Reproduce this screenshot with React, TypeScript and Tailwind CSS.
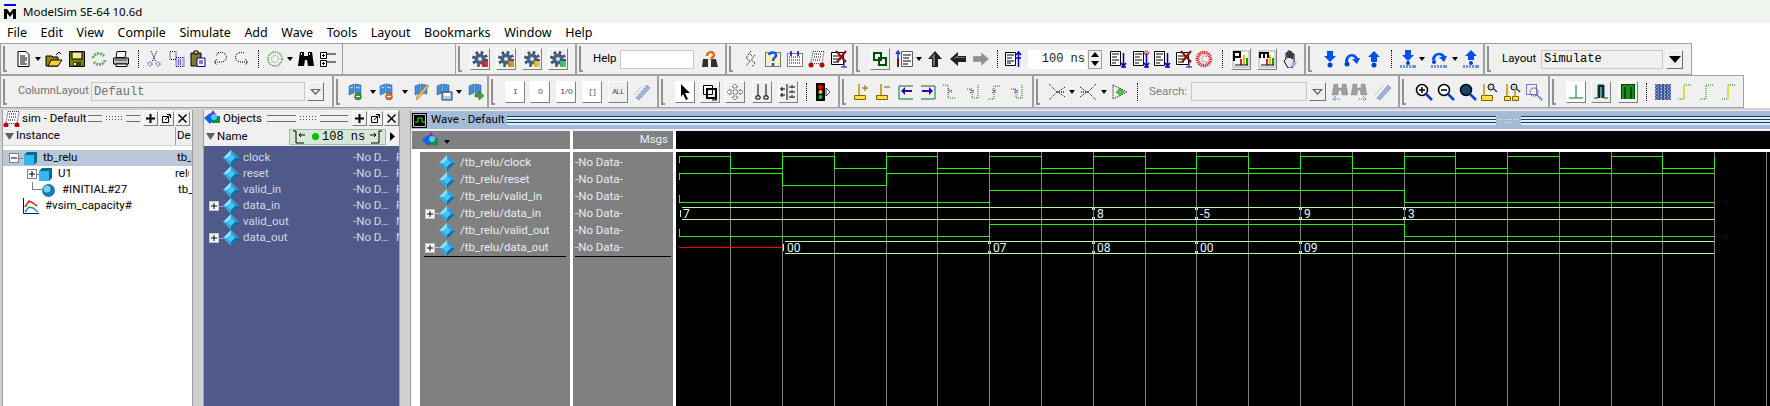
import type { ReactNode } from "react";

type P = { c?: string };
type SP = P & { children?: ReactNode };

const S = ({ c, children }: SP) => (
  <svg viewBox="0 0 18 18" className={`h-[18px] w-[18px] shrink-0 ${c ?? ""}`}>{children}</svg>
);
const Raised = ({ c, children }: SP) => (
  <div className={`flex h-[22px] w-[20px] shrink-0 items-center justify-center border border-t-white border-l-white border-r-[#808080] border-b-[#808080] ${c ?? ""}`}>{children}</div>
);
const Sep = ({ c }: P) => <div className={`h-[18px] w-px shrink-0 border-l border-dotted border-black ${c ?? ""}`} />;
const Down = ({ c }: P) => (
  <svg viewBox="0 0 6 4" className={`h-[4px] w-[6px] shrink-0 ${c ?? ""}`}><path d="M0 0h6L3 4z" fill="#000" /></svg>
);
const Grip = () => (
  <div className="ml-[2px] flex h-[26px] w-[4px] shrink-0 border-l-2 border-b-2 border-l-[#909090] border-b-[#909090]" />
);
const Bar = ({ c, children }: SP) => (
  <div className={`flex h-full shrink-0 items-center border border-[#a0a0a0] bg-[#f0f0f0] ${c ?? ""}`}>
    <Grip />
    {children}
  </div>
);
const Combo = ({ c, solid }: P & { solid?: boolean }) => (
  <div className={`flex h-[19px] w-[17px] shrink-0 items-center justify-center border border-t-white border-l-white border-r-[#707070] border-b-[#707070] ${c ?? ""}`}>
    {solid ? (
      <svg viewBox="0 0 12 7" className="h-[7px] w-[12px]"><path d="M0 0h12L6 7z" fill="#000" /></svg>
    ) : (
      <svg viewBox="0 0 11 6" className="h-[6px] w-[11px]"><path d="M0 0h11L5.5 6z" fill="#666" /><path d="M3 1h5L5.5 4z" fill="#fff" /></svg>
    )}
  </div>
);

const Doc = ({ c }: P) => <S c={c}><path d="M4 1.5h8l3 3v12H4z" fill="#fff" stroke="#000" /><path d="M6 6h5M6 8h7M6 10h7M6 12h5M6 14h7" stroke="#000" /></S>;
const Folder = ({ c }: P) => <S c={c}><path d="M1 6h6l1 1h5v9H1z" fill="#a08000" stroke="#000" /><path d="M3 16l3-6h11l-4 6z" fill="#f0d040" stroke="#000" /><path d="M11 5l3-3 2 2" fill="none" stroke="#000" /></S>;
const Save = ({ c }: P) => <S c={c}><path d="M1.5 1.5h15v15h-15z" fill="#808000" stroke="#000" /><path d="M4 2h10v7H4z" fill="#f0e8a0" stroke="#000" /><path d="M5 12h8v4H5z" fill="#404000" /><path d="M6 13h2v2H6z" fill="#fff" /></S>;
const Sync = ({ c }: P) => <S c={c}><path d="M3 8c1-5 8-6 11-2M15 10c-1 5-8 6-11 2" fill="none" stroke="#60b060" strokeWidth="3" strokeDasharray="2 1" /></S>;
const Printer = ({ c }: P) => <S c={c}><path d="M5 1.5h9l-1 6H4z" fill="#fff" stroke="#000" /><path d="M1.5 8h15v6h-15z" fill="#c0c0c0" stroke="#000" /><path d="M4 14h11v2.5H4z" fill="#fff" stroke="#000" /><path d="M3 10h12" stroke="#404040" /></S>;
const Cut = ({ c }: P) => <S c={c}><path d="M6 1l5 11M12 1L7 12" stroke="#000" strokeDasharray="1 1" /><circle cx="5" cy="14" r="2" fill="none" stroke="#0000d0" strokeDasharray="1 1" /><circle cx="13" cy="14" r="2" fill="none" stroke="#0000d0" strokeDasharray="1 1" /></S>;
const Copy = ({ c }: P) => <S c={c}><path d="M2 1.5h6v8H2z" fill="none" stroke="#000" strokeDasharray="1 1" /><path d="M8 7.5h8v9H8z" fill="#d8d8f0" stroke="#0000b0" strokeDasharray="1 1" /><path d="M10 10h4M10 12h4M10 14h4" stroke="#0000b0" strokeDasharray="1 1" /></S>;
const Paste = ({ c }: P) => <S c={c}><path d="M2 3h10v13H2z" fill="#807830" stroke="#000" /><path d="M5 1h4v3H5z" fill="#e0d070" stroke="#000" /><path d="M8 8h8v8.5H8z" fill="#fff" stroke="#00008b" /><path d="M10 11h4M10 13h4" stroke="#00008b" /></S>;
const Undo = ({ c }: P) => <S c={c}><path d="M6 3c4-2 10 1 8 6-1 3-4 3-6 3H2M5 9l-3 3 3 3M6 3l-2 3" fill="none" stroke="#000" strokeDasharray="1 1" /></S>;
const Redo = ({ c }: P) => <S c={c}><path d="M12 3C8 1 2 4 4 9c1 3 4 3 6 3h6M13 9l3 3-3 3" fill="none" stroke="#000" strokeDasharray="1 1" /></S>;
const Compile = ({ c }: P) => <S c={c}><circle cx="9" cy="9" r="7" fill="none" stroke="#50a050" strokeWidth="1.5" strokeDasharray="1.5 1" /><circle cx="9" cy="9" r="3.5" fill="none" stroke="#50a050" strokeDasharray="1 1" /></S>;
const Binoc = ({ c }: P) => <S c={c}><path d="M3 2h4v4h4V2h4l2 14h-6l-1-6H8l-1 6H1z" fill="#000" /><path d="M4 3h1v2H4zM12 3h1v2h-1z" fill="#fff" /></S>;
const Expand = ({ c }: P) => <S c={c}><path d="M1.5 2.5h6v6h-6zM1.5 10.5h6v6h-6z" fill="#fff" stroke="#000" /><path d="M3 5.5h3M4.5 4v3M3 13.5h3M4.5 12v3M8 4h9M8 12h9" stroke="#000" /></S>;
const Gear = ({ mark }: { mark: string }) => (
  <S>
    <circle cx="9" cy="9" r="6.5" fill="none" stroke="#384868" strokeWidth="3" strokeDasharray="2.5 2.6" />
    <circle cx="9" cy="9" r="5.5" fill="#486080" />
    <circle cx="9" cy="9" r="2" fill="#d8e0f0" />
    <path d="M11 11h6v6h-6z" fill={mark} opacity=".9" />
  </S>
);
const HelpFind = ({ c }: P) => <S c={c}><path d="M2 9h5v8H1zM10 9h5l2 8h-7z" fill="#303030" /><path d="M6 6c0-5 7-5 7-1 0 2-3 2-3 5" fill="none" stroke="#e07000" strokeWidth="2.5" /></S>;
const DotWave = ({ c }: P) => <S c={c}><path d="M9 1l-5 7 4 3-4 5M13 5l-4 5 4 3-3 4" fill="none" stroke="#000" strokeDasharray="1 1" /><path d="M8 4l3 3" stroke="#0000b0" strokeDasharray="1 1" /></S>;
const DocHelp = ({ c }: P) => <S c={c}><path d="M1.5 2.5h15v14h-15z" fill="#f8f0c0" stroke="#000" strokeDasharray="1 1" /><path d="M5 5c1-4 8-3 7 1-1 2-3 2-3 5M9 13v3" fill="none" stroke="#0060e0" strokeWidth="2.5" /></S>;
const DocGrid = ({ c }: P) => <S c={c}><path d="M1.5 3.5h15v13h-15z" fill="#fff" stroke="#000" strokeDasharray="1 1" /><path d="M3 7h12M3 10h12M3 13h12" stroke="#000" strokeDasharray="1 1" /><path d="M5 1v5M12 1v5" stroke="#0000c0" strokeWidth="1.5" /></S>;
const Cart = ({ c }: P) => <S c={c}><path d="M5 1.5h11l-2 12H3z" fill="#fff" stroke="#203080" strokeDasharray="1 1" /><path d="M6 4h8M6 7h8M5 10h8" stroke="#000" strokeDasharray="1 1" /><circle cx="3" cy="15" r="2.5" fill="#c00000" /><circle cx="14" cy="15" r="2.5" fill="#c00000" /></S>;
const DocX = ({ c }: P) => <S c={c}><path d="M1.5 2.5h12v12h-12z" fill="#fff" stroke="#000" /><path d="M3 6h8M3 9h8M3 12h6" stroke="#000" /><path d="M14 10v7M11 17h6" stroke="#0000c0" /><path d="M6 1l10 11M16 1L7 12" stroke="#8b1010" strokeWidth="2" /></S>;
const Chain = () => <S><path d="M3 3h7v7H3zM8 8h7v7H8z" fill="none" stroke="#005000" strokeWidth="2" /></S>;
const ListArrow = ({ c }: P) => <S c={c}><path d="M6.5 1.5h11v15h-11z" fill="#fff" stroke="#606060" /><path d="M8 5h8M8 8h6M8 11h8M8 14h5" stroke="#000" /><path d="M3 17V8" stroke="#801010" strokeWidth="2" /><path d="M3 9V2M1 4l2-3 2 3" fill="none" stroke="#1040d0" strokeWidth="1.5" /></S>;
const ArrowUp = ({ c }: P) => <S c={c}><path d="M9 1l7 8h-4v8H6V9H2z" fill="#202020" /><path d="M9 3L5 8h2v8h2z" fill="#707070" /></S>;
const ArrowLeft = ({ c }: P) => <S c={c}><path d="M1 9l8-7v4h8v6H9v4z" fill="#202020" /><path d="M4 9l5-4v2h7v1H8z" fill="#707070" /></S>;
const ArrowRight = ({ c }: P) => <S c={c}><path d="M17 9l-8-7v4H1v6h8v4z" fill="#909090" stroke="#fff" strokeWidth=".5" strokeDasharray="1 1" /></S>;
const ListUp = ({ c }: P) => <S c={c}><path d="M1.5 2.5h10v13h-10z" fill="#fff" stroke="#000" /><path d="M3 5h7M3 8h5M3 11h7M3 13h4" stroke="#000" /><path d="M14.5 17V2M12 5l2.5-3L17 5M12 8h5" fill="none" stroke="#0000c0" strokeWidth="1.5" /></S>;
const ListDown = ({ c, tone = "#0000c0", head }: P & { tone?: string; head?: string }) => <S c={c}><path d="M1.5 1.5h10v14h-10z" fill="#fff" stroke="#000" /><path d="M3 4h7M3 7h5M3 10h7M3 13h4" stroke="#000" /><path d="M14.5 3v12M12 13l2.5 3 2.5-3M12 17h5" fill="none" stroke={tone} strokeWidth="1.5" />{head && <circle cx="14.5" cy="3" r="2" fill="none" stroke={head} />}</S>;
const RedC = ({ c }: P) => <S c={c}><circle cx="9" cy="9" r="6.5" fill="none" stroke="#e02020" strokeWidth="3.5" strokeDasharray="1.2 .8" /><path d="M12 7a3 3 0 1 0 0 4" fill="none" stroke="#e02020" strokeDasharray="1 1" /></S>;
const Perf = ({ letter }: { letter: "p" | "m" }) => (
  <S>
    <path d="M1 1h16v16H1z" fill="#fff" stroke="#606060" strokeWidth=".5" />
    <path d="M8 15V9h2v6z" fill="#e02020" /><path d="M11 15V5h2v10z" fill="#e0c000" /><path d="M14 15V8h2v7z" fill="#00a000" />
    <path d="M3 15h13" stroke="#000" />
    {letter === "p" ? <path d="M2 11V2h6v5H2" fill="none" stroke="#000" strokeWidth="2" /> : <path d="M2 8V3h8v5M6 3v5" fill="none" stroke="#000" strokeWidth="2" />}
  </S>
);
const Hand = ({ c }: P) => <S c={c}><path d="M5 9V3h2v5-7h2v7-6h2v7-5h2v9l-2 5H7L3 11l1-1z" fill="#e8e8f0" stroke="#000" /><path d="M11 12l5-1-2 5-4 1z" fill="#90b8e0" /></S>;
const StepInto = ({ c }: P) => <S c={c}><path d="M6 1h6v5h3l-6 6-6-6h3z" fill="#0050f0" /><circle cx="9" cy="15" r="2.5" fill="#0040d0" /></S>;
const StepOver = ({ c }: P) => <S c={c}><path d="M2 12C2 4 11 1 15 8h2l-3 6-5-5h3C10 5 5 6 5 12z" fill="#0050f0" /><circle cx="4" cy="14" r="2.5" fill="#0040d0" /></S>;
const StepOut = ({ c }: P) => <S c={c}><path d="M9 1l6 6h-3v5H6V7H3z" fill="#0050f0" /><circle cx="9" cy="15" r="2.5" fill="#0040d0" /></S>;
const Ticks = () => <path d="M2 15v3M5 15v3M8 15v3M11 15v3M14 15v3M16 15v3" stroke="#0030c0" />;
const StepIntoC = ({ c }: P) => <S c={c}><path d="M6 0h6v5h3l-6 6-6-6h3z" fill="#0050f0" /><circle cx="9" cy="13" r="2" fill="#0040d0" /><Ticks /></S>;
const StepOverC = ({ c }: P) => <S c={c}><path d="M2 10C2 3 11 0 15 6h2l-3 6-5-5h3C10 4 5 5 5 10z" fill="#0050f0" /><circle cx="4" cy="12" r="2" fill="#0040d0" /><Ticks /></S>;
const StepOutC = ({ c }: P) => <S c={c}><path d="M9 0l6 6h-3v4H6V6H3z" fill="#0050f0" /><circle cx="9" cy="13" r="2" fill="#0040d0" /><Ticks /></S>;
const WinAdd = ({ c, badge }: P & { badge: string }) => <S c={c}><path d="M2 3l5-2v9l-5 2zM8 1l6 1v9l-6-1z" fill="#4090e0" stroke="#205090" strokeWidth=".5" /><path d="M3 5l3-1M9 4l4 1" stroke="#c0e0ff" /><circle cx="11" cy="13.5" r="3.5" fill={badge} stroke="#404040" strokeWidth=".5" /><path d="M9 13.5h4" stroke="#fff" /></S>;
const WinEdit = ({ c }: P) => <S c={c}><path d="M2 3l5-2v9l-5 2zM8 1l6 1v9l-6-1z" fill="#4090e0" stroke="#205090" strokeWidth=".5" /><path d="M16 3L6 15l-3 2 1-4L14 2z" fill="#f0c060" stroke="#a06000" strokeWidth=".5" /></S>;
const WinSave = ({ c }: P) => <S c={c}><path d="M2 3l5-2v9l-5 2zM8 1l6 1v9l-6-1z" fill="#4090e0" stroke="#205090" strokeWidth=".5" /><path d="M7 9h10v8H7z" fill="#b0c8e8" stroke="#203060" /><path d="M9 10h6v3H9z" fill="#fff" /></S>;
const WinGo = ({ c }: P) => <S c={c}><path d="M2 3l5-2v9l-5 2zM8 1l6 1v9l-6-1z" fill="#4090e0" stroke="#205090" strokeWidth=".5" /><path d="M8 11h4V8l5 5-5 4v-3H8z" fill="#50a030" stroke="#305010" strokeWidth=".5" /></S>;
const Label = ({ t }: { t: string }) => <span className="flex h-[18px] w-[18px] items-center justify-center font-['Liberation_Mono'] text-[8px] tracking-[-1px] text-[#505050]">{t}</span>;
const FadeAll = ({ c }: P) => <S c={c}><path d="M3 15L14 2l3 3L6 17z" fill="#a0b0e0" stroke="#7080c0" strokeDasharray="1 1" /><path d="M1 12l8-9" stroke="#b090c0" strokeDasharray="1 1" /></S>;
const Pointer = () => <S><path d="M5 1l9 9H9l3 6-2 1-3-6-2 3z" fill="#000" /></S>;
const Frames = () => <S><path d="M2.5 2.5h9v9h-9z" fill="none" stroke="#000" /><path d="M6 6h9v9H6z" fill="none" stroke="#000" strokeWidth="2" /><path d="M15 11v6M11 17h5" stroke="#000" /></S>;
const Move = () => <S><path d="M9 1l3 3h-2v4h4V6l3 3-3 3v-2h-4v4h2l-3 3-3-3h2v-4H4v2L1 9l3-3v2h4V4H6z" fill="#fff" stroke="#000" strokeWidth=".7" strokeDasharray="1 .6" /></S>;
const Cursors = () => <S><path d="M5 1v12M13 1v12" stroke="#000" /><path d="M3 13h4v3H3zM11 13h4v3h-4z" fill="#fff" stroke="#000" /></S>;
const Columns = () => <S><path d="M8 1v16M1 6h5M1 12h5M10 4h6M10 9h6M10 14h6" stroke="#000" /><path d="M3 4v4M3 10v4" stroke="#000" /><path d="M13 2v4M13 7v4M13 12v4" stroke="#000" strokeDasharray="1 1" /></S>;
const Traffic = ({ c }: P) => <S c={c}><path d="M3 0h9v18H3z" fill="#000" /><circle cx="7.5" cy="4" r="2.5" fill="#f00000" /><circle cx="7.5" cy="9" r="2" fill="#e0d000" /><circle cx="7.5" cy="14" r="2" fill="#20c020" /><path d="M13 5l4 4-4 4z" fill="#fff" stroke="#000" strokeWidth=".7" /></S>;
const CursorPlus = ({ minus }: { minus?: boolean }) => <S><path d="M6 1v13" stroke="#c09000" strokeWidth="1.5" /><path d="M1.5 12.5h11v4h-11z" fill="#ffe040" stroke="#806000" />{minus ? <path d="M9 4h6" stroke="#806000" /> : <path d="M9 5h6M12 2v6" stroke="#806000" />}</S>;
const EdgeLeft = () => <S><path d="M2 3v13h14M16 3H2" fill="none" stroke="#007040" /><path d="M15 7H8V4L4 8l4 4V9h7z" fill="#3000c0" /></S>;
const EdgeRight = () => <S><path d="M16 3v13H2M2 3h14" fill="none" stroke="#007040" /><path d="M3 7h7V4l4 4-4 4V9H3z" fill="#3000c0" /></S>;
const Dotted = ({ c, flip, up }: P & { flip?: boolean; up?: boolean }) => <S c={c}><path d={flip ? "M15 2v13H9V6H3" : up ? "M3 16h6V3h6" : "M2 2h5v13h8"} fill="none" stroke="#108010" strokeDasharray="1 1" /><path d="M7 6l4 4M7 10l4-3" stroke="#3000c0" strokeDasharray="1 1" /></S>;
const Fork = ({ c, rev }: P & { rev?: boolean }) => <S c={c}><path d={rev ? "M1 4l7 5-7 5M17 1l-8 8 8 8" : "M1 1l8 8-8 8M17 4l-7 5 7 5"} fill="none" stroke="#000" strokeDasharray="1 1" /><path d={rev ? "M2 9h7" : "M9 9h7"} stroke="#2060e0" strokeDasharray="1 1" strokeWidth="2" /></S>;
const Diff = ({ c }: P) => <S c={c}><path d="M2 2l14 7-14 7z" fill="none" stroke="#000" strokeDasharray="1 1" /><path d="M9 5l4 4-4 4-4-4z" fill="#50c050" stroke="#108010" strokeDasharray="1 1" /></S>;
const FindA = ({ c, r }: P & { r?: boolean }) => <S c={c}><path d="M3 1h4v4h4V1h4l2 11h-6l-1-5H8l-1 5H1z" fill="#a0a0a0" stroke="#606060" strokeWidth=".5" strokeDasharray="1 1" /><path d={r ? "M9 16h7M13 13l3 3-3 2" : "M9 16H2M5 13l-3 3 3 2"} fill="none" stroke="#3060f0" strokeDasharray="1 1" /></S>;
const ZoomG = ({ c, k }: P & { k: "+" | "-" | "f" }) => (
  <S c={c}>
    <circle cx="7" cy="7" r="5.5" fill={k === "f" ? "#104870" : "#fff"} stroke="#000" strokeWidth="1.5" />
    {k !== "f" && <path d="M4 7h6" stroke="#000" strokeWidth="1.5" />}
    {k === "+" && <path d="M7 4v6" stroke="#000" strokeWidth="1.5" />}
    <path d="M11 11l6 6" stroke="#0040d0" strokeWidth="2.5" />
  </S>
);
const ZoomC = ({ c, two }: P & { two?: boolean }) => (
  <S c={c}>
    <circle cx="11" cy="4" r="3" fill="#d0d0d0" stroke="#000" />
    <path d="M14 6l3 3" stroke="#0040d0" strokeWidth="1.5" />
    {two ? <path d="M1.5 13.5h6v4h-6zM9.5 13.5h6v4h-6z" fill="#ffe040" stroke="#806000" /> : <path d="M1.5 12.5h11v5h-11z" fill="#ffe040" stroke="#806000" />}
    <path d="M4 1v12" stroke="#c09000" strokeWidth="1.5" />
    {two && <path d="M12 6v8" stroke="#c09000" strokeWidth="1.5" />}
  </S>
);
const ZoomD = ({ c }: P) => <S c={c}><path d="M1.5 1.5h10v10h-10z" fill="none" stroke="#0000c0" strokeDasharray="1 1" /><circle cx="9" cy="9" r="4" fill="none" stroke="#000" strokeDasharray="1 1" /><path d="M12 12l5 5" stroke="#0040d0" strokeDasharray="1 1" strokeWidth="2" /></S>;
const WaveLine = () => <S><path d="M9 2v13M2 15h14" stroke="#007030" /></S>;
const WaveBlue = () => <S><path d="M2 15h4V2h6v13h4" fill="#101070" stroke="#005020" /><path d="M8 4h2v11H8z" fill="#60a060" /></S>;
const WaveGreen = () => <S><path d="M2 1h14v15H2z" fill="#005000" /><path d="M4 16V3h4v13M10 16V3h4v13" fill="none" stroke="#40c040" /></S>;
const Checker = ({ c }: P) => <S c={c}><path d="M1 1h16v16H1z" fill="#203890" opacity=".85" /><path d="M1 3h16M1 6h16M1 9h16M1 12h16M1 15h16M3 1v16M7 1v16M11 1v16M15 1v16" stroke="#e0e8e0" strokeDasharray="1 2" /></S>;
const StepY = ({ c, tone }: P & { tone: string }) => <S c={c}><path d="M2 16h6V2h8" fill="none" stroke="#108010" strokeDasharray="1 1" /><path d="M8 2v14" stroke={tone} strokeWidth="1.5" /></S>;

const menus = ["File", "Edit", "View", "Compile", "Simulate", "Add", "Wave", "Tools", "Layout", "Bookmarks", "Window", "Help"];

const PanelBtn = ({ kind }: { kind: "plus" | "undock" | "x" }) => (
  <div className="flex h-[15px] w-[15px] shrink-0 items-center justify-center border border-t-white border-l-white border-r-[#808080] border-b-[#808080]">
    <svg viewBox="0 0 11 11" className="h-[11px] w-[11px]">
      {kind === "plus" && <path d="M1 5.5h9M5.5 1v9" stroke="#000" strokeWidth="2" />}
      {kind === "undock" && <path d="M1.5 3.5h6v6h-6zM6 1.5h3.5V5M4 7l5-5" fill="none" stroke="#000" />}
      {kind === "x" && <path d="M1.5 1.5l8 8M9.5 1.5l-8 8" stroke="#000" strokeWidth="1.5" />}
    </svg>
  </div>
);
const Drag = ({ c }: P) => (
  <div className={`flex h-[8px] items-center ${c ?? ""}`}>
    <div className="h-[7px] flex-1 border-y border-[#707070]" />
    <div className="mx-[3px] h-[7px] w-[18px] bg-[radial-gradient(#505050_0.6px,transparent_0.8px)] bg-[length:3px_3px]" />
    <div className="h-[7px] flex-1 border-y border-[#707070]" />
  </div>
);
const Box = ({ c, minus, light }: P & { minus?: boolean; light?: boolean }) => (
  <div className={`flex h-[10px] w-[10px] shrink-0 items-center justify-center border border-[#808080] bg-white ${light ? "border-[#c0c0c0]" : ""} ${c ?? ""}`}>
    <svg viewBox="0 0 8 8" className="h-[8px] w-[8px]"><path d="M1 4h6" stroke="#000" />{!minus && <path d="M4 1v6" stroke="#000" />}</svg>
  </div>
);
const Diamond = ({ c }: P) => (
  <svg viewBox="0 0 16 16" className={`h-[16px] w-[16px] shrink-0 ${c ?? ""}`}>
    <path d="M8 0l8 8H8z" fill="#2aa0e0" /><path d="M8 0L0 8h8z" fill="#90e0ff" /><path d="M0 8l8 8V8z" fill="#30a8e8" /><path d="M16 8l-8 8V8z" fill="#0870b0" />
    <path d="M8 4l4 4-4 4-4-4z" fill="#48c4f4" />
  </svg>
);
const Cube = ({ c }: P) => (
  <svg viewBox="0 0 13 13" className={`h-[13px] w-[13px] shrink-0 ${c ?? ""}`}><path d="M0 3h10v10H0z" fill="#30b8f0" /><path d="M10 3l3-3v10l-3 3zM0 3l3-3h10l-3 3z" fill="#086898" /></svg>
);
const WinIcon = ({ c }: P) => (
  <svg viewBox="0 0 17 17" className={`h-[17px] w-[17px] shrink-0 ${c ?? ""}`}><path d="M5 6l4-6 4 6z" fill="#a020c0" /><path d="M8 6h8v7H8z" fill="#109040" /><path d="M6 3l5 5-5 6-6-6z" fill="#1060e0" /><circle cx="10" cy="7" r="3" fill="#40d0f0" /></svg>
);

const grid = [730, 782, 834, 886, 937, 989, 1041, 1093, 1145, 1196, 1248, 1300, 1352, 1404, 1455, 1507, 1559, 1611, 1662, 1714, 1766];
const clockPath = (() => {
  let d = "M679.5 163V156.5";
  let high = true;
  for (const x of grid.slice(0, 20)) {
    d += `H${x + 0.5}`;
    high = !high;
    d += `V${high ? 156.5 : 168.5}`;
  }
  return d;
})();
const busPath = (top: number, bot: number, start: number, cuts: number[]) => {
  let d = `M${start + 2} ${top + 0.5}H1714M${start + 2} ${bot + 0.5}H1714M${start + 0.5} ${top + 3}V${bot - 2}`;
  for (const x of cuts) {
    d += `M${x - 0.5} ${top}v3M${x - 0.5} ${bot - 2}v3M${x + 1.5} ${top}v3M${x + 1.5} ${bot - 2}v3`;
  }
  return d;
};
const values = [
  [683, 218, "7"], [1097, 218, "8"], [1200, 218, "-5"], [1304, 218, "9"], [1408, 218, "3"],
  [787, 252, "00"], [993, 252, "07"], [1097, 252, "08"], [1200, 252, "00"], [1304, 252, "09"],
] as const;

const Waves = () => (
  <svg viewBox="676 152 1094 254" className="block h-[254px] w-[1094px]" shapeRendering="crispEdges">
    {grid.map((x) => <path key={x} d={`M${x + 0.5} 152V406`} stroke="#808080" />)}
    <g fill="none" stroke="#28f010">
      <path d={clockPath} />
      <path d="M679.5 180V173.5H782.5V185.5H886.5V173.5H1714" />
      <path d="M679.5 195V202.5H989.5V190.5H1404.5V202.5H1714" />
      <path d="M679.5 229V236.5H989.5V224.5H1404.5V236.5H1714" />
    </g>
    <path d="M679 247.5H782" stroke="#f00000" />
    <g fill="none" stroke="#c0f4b0">
      <path d={busPath(207, 219, 680, [1093, 1196, 1300, 1404])} />
      <path d={busPath(241, 253, 783, [989, 1093, 1196, 1300])} />
    </g>
    <g fontFamily="Roboto, sans-serif" fontSize="12" fill="#e8f4ff" shapeRendering="auto">
      {values.map(([x, y, t]) => <text key={`${x}-${y}`} x={x} y={y}>{t}</text>)}
    </g>
  </svg>
);

const ObjRow = ({ name, kind, plus }: { name: string; kind: string; plus?: boolean }) => (
  <div className="flex h-[16px] items-center leading-none text-[#d0d8e8]">
    <div className="flex w-[19px] shrink-0 items-center justify-end">
      {plus && <><Box c="shrink-0" light /><div className="h-px w-[4px] shrink-0 bg-[#a0a8c8]" /></>}
    </div>
    <Diamond />
    <span className="ml-[4px] w-[110px] shrink-0 truncate">{name}</span>
    <span className="w-[43px] shrink-0 whitespace-nowrap">-No D…</span>
    <span className="w-[3px] overflow-hidden">{kind}</span>
  </div>
);
const WaveName = ({ name, plus }: { name: string; plus?: boolean }) => (
  <div className="flex h-[17px] items-center leading-none text-[#e8eef4]">
    <div className="flex w-[19px] shrink-0 items-center justify-start">
      {plus && <><Box c="ml-[5px]" light /><div className="h-px w-[4px] shrink-0 bg-[#c0c0c0]" /></>}
    </div>
    <Diamond />
    <span className="ml-[5px] truncate">{name}</span>
  </div>
);

export default function App() {
  return (
    <div className="flex h-[406px] w-[1770px] flex-col overflow-hidden bg-white font-['Roboto',sans-serif] text-[11.5px] text-black">
      <div className="flex h-[23px] shrink-0 items-center bg-[#f0f4ee] pl-[3px] font-['Noto_Sans',sans-serif] text-[11.5px]">
        <svg viewBox="0 0 14 15" className="h-[15px] w-[14px]"><path d="M1 0h12v2H1z" fill="#0000e0" /><path d="M1 15V5h3l3 4 3-4h3v10h-3V9l-3 4-3-4v6z" fill="#000" /></svg>
        <span className="ml-[6px] whitespace-nowrap">ModelSim SE-64 10.6d</span>
      </div>
      <div className="flex h-[20px] shrink-0 items-center gap-[13.6px] pl-[7px] font-['Noto_Sans',sans-serif] text-[12.5px]">
        {menus.map((m) => <span key={m}>{m}</span>)}
      </div>

      <div className="flex h-[32px] shrink-0">
        <Bar c="w-[343px]">
          <Doc c="ml-[7px]" /><Down c="ml-[3px]" /><Folder c="ml-[4px]" /><Save c="ml-[5px]" /><Sync c="ml-[4px]" /><Printer c="ml-[4px]" />
          <Sep c="ml-[8px]" /><Cut c="ml-[6px]" /><Copy c="ml-[5px]" /><Paste c="ml-[3px]" /><Undo c="ml-[5px]" /><Redo c="ml-[2px]" />
          <Sep c="ml-[8px]" /><Compile c="ml-[7px]" /><Down c="ml-[3px]" /><Binoc c="ml-[4px]" /><Expand c="ml-[4px]" />
        </Bar>
        <div className="w-[112px] shrink-0 border-y border-[#a0a0a0] bg-[#f0f0f0]" />
        <Bar c="w-[121px]">
          <div className="ml-[8px] flex gap-[6px]">
            <Raised><Gear mark="#d02020" /></Raised><Raised><Gear mark="#c09020" /></Raised><Raised><Gear mark="#e0c030" /></Raised><Raised><Gear mark="#40c060" /></Raised>
          </div>
        </Bar>
        <Bar c="w-[150px]">
          <span className="ml-[10px] w-[27px] shrink-0">Help</span>
          <div className="h-[19px] w-[74px] shrink-0 border border-[#c8c8c8] bg-white" />
          <HelpFind c="ml-[7px]" />
        </Bar>
        <Bar c="w-[127px]">
          <div className="ml-[9px] flex gap-[4px]"><DotWave /><DocHelp /><DocGrid /><Cart /><DocX /></div>
        </Bar>
        <Bar c="w-[452px]">
          <Raised c="ml-[10px]"><Chain /></Raised><ListArrow c="ml-[5px]" /><Down c="ml-[3px]" /><ArrowUp c="ml-[4px]" /><ArrowLeft c="ml-[5px]" /><ArrowRight c="ml-[5px]" />
          <Sep c="ml-[7px]" /><ListUp c="ml-[6px]" />
          <div className="ml-[6px] flex h-[19px] w-[59px] shrink-0 items-center justify-end bg-white pr-[2px] font-['Liberation_Mono'] text-[12px] whitespace-pre text-[#202020]">100 ns</div>
          <div className="ml-[1px] flex h-[19px] w-[14px] shrink-0 flex-col items-center justify-around border border-[#a0a0a0]">
            <svg viewBox="0 0 8 5" className="h-[5px] w-[8px]"><path d="M4 0l4 5H0z" /></svg>
            <svg viewBox="0 0 8 5" className="h-[5px] w-[8px]"><path d="M0 0h8L4 5z" /></svg>
          </div>
          <ListDown c="ml-[7px]" /><ListDown c="ml-[5px]" head="#e02020" /><ListDown c="ml-[3px]" /><DocX c="ml-[4px]" /><RedC c="ml-[2px]" />
          <Sep c="ml-[9px]" /><Raised c="ml-[8px]"><Perf letter="p" /></Raised><Raised c="ml-[6px]"><Perf letter="m" /></Raised><Hand c="ml-[4px]" />
        </Bar>
        <Bar c="w-[179px]">
          <StepInto c="ml-[9px]" /><StepOver c="ml-[4px]" /><StepOut c="ml-[4px]" /><Sep c="ml-[8px]" />
          <StepIntoC c="ml-[7px]" /><Down c="ml-[2px]" /><StepOverC c="ml-[5px]" /><Down c="ml-[4px]" /><StepOutC c="ml-[4px]" />
        </Bar>
        <Bar c="w-[208px]">
          <span className="ml-[11px] w-[36px] shrink-0">Layout</span>
          <div className="ml-[3px] flex h-[19px] w-[122px] shrink-0 items-center border border-[#c8c8c8] pl-[2px] font-['Liberation_Mono'] text-[12px]">Simulate</div>
          <Combo c="ml-[3px]" solid />
        </Bar>
      </div>

      <div className="flex h-[33px] shrink-0">
        <Bar c="w-[333px]">
          <span className="ml-[11px] w-[70px] shrink-0 whitespace-nowrap text-[11px] text-[#707070]">ColumnLayout</span>
          <div className="ml-[3px] flex h-[19px] w-[214px] shrink-0 items-center border border-[#c8c8c8] pl-[2px] font-['Liberation_Mono'] text-[12px] text-[#707070]">Default</div>
          <Combo c="ml-[2px]" />
        </Bar>
        <Bar c="w-[155px]">
          <WinAdd c="ml-[7px]" badge="#30a030" /><Down c="ml-[5px]" /><WinAdd c="ml-[2px]" badge="#e07020" /><Down c="ml-[6px]" /><WinEdit c="ml-[5px]" /><WinSave c="ml-[4px]" /><Down c="ml-[3px]" /><WinGo c="ml-[5px]" />
        </Bar>
        <Bar c="w-[170px]">
          <Raised c="ml-[10px] bg-white"><Label t="I" /></Raised><Raised c="ml-[5px] bg-white"><Label t="O" /></Raised><Raised c="ml-[6px] bg-white"><Label t="I/O" /></Raised>
          <Raised c="ml-[6px] bg-white"><Label t="[]" /></Raised><Raised c="ml-[6px]"><Label t="ALL" /></Raised><FadeAll c="ml-[5px]" />
        </Bar>
        <Bar c="w-[181px]">
          <Raised c="ml-[10px] bg-white"><Pointer /></Raised><Raised c="ml-[5px]"><Frames /></Raised><Raised c="ml-[5px]"><Move /></Raised><Raised c="ml-[7px]"><Cursors /></Raised><Raised c="ml-[6px]"><Columns /></Raised>
          <Sep c="ml-[8px]" /><Traffic c="ml-[6px]" />
        </Bar>
        <Bar c="w-[194px]">
          <div className="ml-[7px] flex gap-[4px]">
            <CursorPlus /><CursorPlus minus /><EdgeLeft /><EdgeRight /><Dotted /><Dotted flip /><Dotted up /><Dotted flip />
          </div>
        </Bar>
        <Bar c="w-[366px]">
          <Fork c="ml-[8px]" /><Down c="ml-[3px]" /><Fork c="ml-[4px]" rev /><Down c="ml-[4px]" /><Diff c="ml-[4px]" /><Sep c="ml-[8px]" />
          <span className="ml-[11px] w-[40px] shrink-0 text-[#808080]">Search:</span>
          <div className="ml-[2px] h-[19px] w-[116px] shrink-0 border border-[#c8c8c8]" />
          <Combo c="ml-[2px]" /><FindA c="ml-[5px]" /><FindA c="ml-[1px]" r /><FadeAll c="ml-[6px]" />
        </Bar>
        <Bar c="w-[150px]">
          <ZoomG c="ml-[9px]" k="+" /><ZoomG c="ml-[4px]" k="-" /><ZoomG c="ml-[4px]" k="f" /><ZoomC c="ml-[3px]" /><ZoomC c="ml-[5px]" two /><ZoomD c="ml-[4px]" />
        </Bar>
        <Bar c="w-[195px]">
          <Raised c="ml-[10px] bg-white"><WaveLine /></Raised><Raised c="ml-[5px]"><WaveBlue /></Raised><Raised c="ml-[7px]"><WaveGreen /></Raised>
          <Sep c="ml-[8px]" /><Checker c="ml-[7px]" /><StepY c="ml-[4px]" tone="#e8e020" /><StepY c="ml-[4px]" tone="transparent" /><StepY c="ml-[4px]" tone="#e8e020" />
        </Bar>
      </div>

      <div className="flex min-h-0 flex-1 bg-[#d0d0d0] pt-[2px] pl-[2px]">
        <div className="flex w-[191px] shrink-0 flex-col border-x border-[#a0a0a0] bg-white">
          <div className="flex h-[17px] shrink-0 items-center bg-[#f0f0f0]">
            <Cart />
            <span className="ml-px w-[62px] shrink-0 whitespace-nowrap">sim - Default</span>
            <Drag c="ml-[4px] w-[52px]" />
            <div className="ml-[3px] flex gap-[1px]"><PanelBtn kind="plus" /><PanelBtn kind="undock" /><PanelBtn kind="x" /></div>
          </div>
          <div className="flex h-[19px] shrink-0 items-center border-b border-[#d0d0d0] bg-[#f0f0f0]">
            <svg viewBox="0 0 9 7" className="ml-[2px] h-[7px] w-[9px]"><path d="M0 0h9L4.5 7z" fill="#606060" /></svg>
            <span className="ml-[2px] w-[160px] shrink-0 border-r border-[#a0a0a0]">Instance</span>
            <span className="ml-[1px]">De</span>
          </div>
          <div className="flex flex-col pt-[4px] leading-none">
            <div className="flex h-[16px] items-center bg-[#b9c8d8]">
              <Box c="ml-[6px]" minus /><div className="h-px w-[4px] bg-[#808080]" /><Cube c="ml-[1px]" />
              <span className="ml-[6px] w-[134px] shrink-0">tb_relu</span><span className="w-[14px] overflow-hidden whitespace-nowrap">tb_relu</span>
            </div>
            <div className="flex h-[16px] items-center">
              <Box c="ml-[24px]" /><div className="h-px w-[2px] bg-[#808080]" /><Cube />
              <span className="ml-[6px] w-[117px] shrink-0">U1</span><span className="w-[14px] overflow-hidden whitespace-nowrap">relu</span>
            </div>
            <div className="flex h-[16px] items-center">
              <div className="ml-[29px] h-[8px] w-[10px] -translate-y-[4px] border-b border-l border-[#808080]" />
              <svg viewBox="0 0 13 13" className="h-[13px] w-[13px] shrink-0"><circle cx="6.5" cy="6.5" r="6.5" fill="#1878b0" /><circle cx="5" cy="5" r="3.5" fill="#70d0f0" /></svg>
              <span className="ml-[7px] w-[116px] shrink-0">#INITIAL#27</span><span className="w-[14px] overflow-hidden whitespace-nowrap">tb_relu</span>
            </div>
            <div className="flex h-[16px] items-center">
              <svg viewBox="0 0 16 16" className="ml-[20px] h-[16px] w-[16px] shrink-0"><path d="M.5 0v15.5H16" fill="none" stroke="#0000c0" /><path d="M2 9l4-6 4 2 4 3" fill="none" stroke="#e02020" strokeWidth="1.5" /><path d="M2 14l4-5 4 1 5 4" fill="none" stroke="#20a060" strokeWidth="1.5" /></svg>
              <span className="ml-[6px]">#vsim_capacity#</span>
            </div>
          </div>
        </div>
        <div className="w-[10px] shrink-0" />
        <div className="flex w-[197px] shrink-0 flex-col border-x border-[#a0a0a0] bg-[#4f5a8a]">
          <div className="flex h-[17px] shrink-0 items-center bg-[#f0f0f0]">
            <WinIcon />
            <span className="ml-[2px] w-[44px] shrink-0">Objects</span>
            <Drag c="w-[81px]" />
            <div className="ml-[4px] flex gap-[1px]"><PanelBtn kind="plus" /><PanelBtn kind="undock" /><PanelBtn kind="x" /></div>
          </div>
          <div className="flex h-[19px] shrink-0 items-center bg-[#f0f0f0]">
            <svg viewBox="0 0 9 7" className="ml-[2px] h-[7px] w-[9px]"><path d="M0 0h9L4.5 7z" fill="#606060" /></svg>
            <span className="ml-[2px] w-[72px] shrink-0">Name</span>
            <div className="flex h-[16px] w-[97px] shrink-0 items-center border border-[#a8b8a8] bg-[#d8e8d8] font-['Liberation_Mono'] text-[12px] whitespace-pre">
              <svg viewBox="0 0 14 14" className="ml-[2px] h-[14px] w-[14px]"><path d="M1 1h3v12h8M13 5H7M9 3L7 5l2 2" fill="none" stroke="#000" /></svg>
              <span className="ml-[6px] h-[7px] w-[7px] rounded-full bg-[#00c000]" />
              <span className="ml-[3px] w-[44px]">108 ns</span>
              <svg viewBox="0 0 14 14" className="ml-[3px] h-[14px] w-[14px]"><path d="M1 5h6M5 3l2 2-2 2M13 1h-3v12H2" fill="none" stroke="#000" /></svg>
            </div>
            <svg viewBox="0 0 5 9" className="ml-[4px] h-[9px] w-[5px]"><path d="M0 0l5 4.5L0 9z" /></svg>
          </div>
          <div className="flex flex-col pt-[4px]">
            <ObjRow name="clock" kind="Packed" />
            <ObjRow name="reset" kind="Packed" />
            <ObjRow name="valid_in" kind="Packed" />
            <ObjRow name="data_in" kind="Packed" plus />
            <ObjRow name="valid_out" kind="Net" />
            <ObjRow name="data_out" kind="Net" plus />
          </div>
        </div>
        <div className="w-[10px] shrink-0" />
        <div className="flex min-w-0 flex-1 flex-col border-l border-[#a0a0a0] bg-[#f0f0f0]">
          <div className="mt-px flex h-[18px] shrink-0 items-center bg-[#a2bcd8]">
            <svg viewBox="0 0 15 15" className="ml-px h-[15px] w-[15px]"><path d="M0 0h15v15H0z" fill="#000" /><path d="M1.5 1.5h12v12h-12z" fill="#000" stroke="#c0c0c0" /><path d="M3 9h3V5h4v4h3" fill="none" stroke="#30f010" /></svg>
            <span className="ml-[4px] w-[76px] shrink-0 whitespace-nowrap">Wave - Default</span>
            <div className="h-[9px] flex-1 bg-[repeating-linear-gradient(#1a3a68_0_1px,#e0ecf8_1px_3px)]" />
            <div className="mx-[2px] h-[5px] w-[21px] bg-[radial-gradient(#ffffff_0.6px,transparent_0.8px)] bg-[length:3px_3px]" />
            <div className="h-[9px] w-[249px] shrink-0 bg-[repeating-linear-gradient(#1a3a68_0_1px,#e0ecf8_1px_3px)]" />
          </div>
          <div className="flex min-h-0 flex-1 pt-[2px] pl-px">
            <div className="flex w-[158px] shrink-0 flex-col bg-white">
              <div className="flex h-[18px] shrink-0 items-center bg-[#808080] pl-[10px]">
                <WinIcon />
                <Down c="ml-[5px] mt-[4px]" />
              </div>
              <div className="h-[3px] shrink-0" />
              <div className="ml-[8px] flex-1 bg-[#808080] pt-[2px]">
                <WaveName name="/tb_relu/clock" />
                <WaveName name="/tb_relu/reset" />
                <WaveName name="/tb_relu/valid_in" />
                <WaveName name="/tb_relu/data_in" plus />
                <WaveName name="/tb_relu/valid_out" />
                <WaveName name="/tb_relu/data_out" plus />
                <div className="ml-[4px] mr-[4px] h-px bg-black" />
              </div>
            </div>
            <div className="w-[3px] shrink-0 bg-white" />
            <div className="flex w-[100px] shrink-0 flex-col bg-white">
              <div className="flex h-[18px] shrink-0 items-center justify-end bg-[#808080] pr-[5px] text-[#e8eef4]">Msgs</div>
              <div className="h-[3px] shrink-0" />
              <div className="flex-1 bg-[#808080] pt-[2px] text-[#e8eef4]">
                {[0, 1, 2, 3, 4, 5].map((i) => <div key={i} className="flex h-[17px] items-center pl-[2px] leading-none">-No Data-</div>)}
                <div className="mx-[2px] h-px bg-black" />
              </div>
            </div>
            <div className="w-[3px] shrink-0 bg-white" />
            <div className="flex min-w-0 flex-1 flex-col bg-black">
              <div className="h-[18px] shrink-0" />
              <div className="h-[3px] shrink-0 bg-white" />
              <Waves />
            </div>
          </div>
        </div>
      </div>
    </div>
  );
}
